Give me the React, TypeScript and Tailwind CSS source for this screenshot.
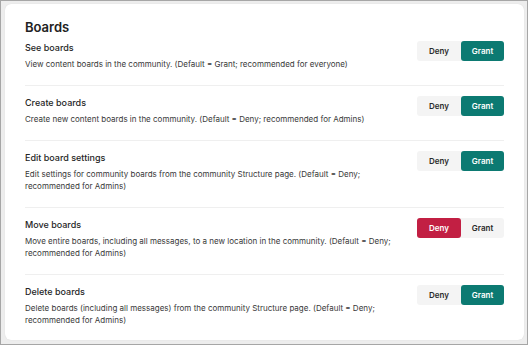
import React from "react";

type Row = { title: string; desc: string; value: "grant" | "deny" };

const rows: Row[] = [
  { title: "See boards", desc: "View content boards in the community. (Default = Grant; recommended for everyone)", value: "grant" },
  { title: "Create boards", desc: "Create new content boards in the community. (Default = Deny; recommended for Admins)", value: "grant" },
  { title: "Edit board settings", desc: "Edit settings for community boards from the community Structure page. (Default = Deny; recommended for Admins)", value: "grant" },
  { title: "Move boards", desc: "Move entire boards, including all messages, to a new location in the community. (Default = Deny; recommended for Admins)", value: "deny" },
  { title: "Delete boards", desc: "Delete boards (including all messages) from the community Structure page. (Default = Deny; recommended for Admins)", value: "grant" },
];

function Toggle({ value }: { value: "grant" | "deny" }) {
  return (
    <div className="flex shrink-0 rounded-[3px] bg-[#f4f4f4] text-[8px] font-semibold leading-none">
      <div
        className={
          value === "deny"
            ? "flex h-[20px] w-[44px] items-center justify-center rounded-[3px] bg-[#c21f43] text-white"
            : "flex h-[20px] w-[44px] items-center justify-center rounded-[3px] text-[#2b2b2b]"
        }
      >
        Deny
      </div>
      <div
        className={
          value === "grant"
            ? "flex h-[20px] w-[43px] items-center justify-center rounded-[3px] bg-[#0c7a72] text-white"
            : "flex h-[20px] w-[43px] items-center justify-center rounded-[3px] text-[#2b2b2b]"
        }
      >
        Grant
      </div>
    </div>
  );
}

export default function App() {
  return (
    <div
      className="h-[345px] w-[528px] border border-[#a6a6a6] bg-[#ededed] pt-[3px] pl-[4px] pr-[3px] pb-[4px]"
      style={{ fontFamily: "Inter, 'Noto Sans', sans-serif" }}
    >
      <div className="h-full rounded-[6px] bg-white px-[20px] pt-[14px] shadow-[0_0_1px_rgba(0,0,0,0.12)]">
        <h1 className="text-[13px] font-semibold leading-[18px] text-[#222222]">Boards</h1>
        <div className="flex flex-col">
          {rows.map((r, i) => (
            <div
              key={r.title}
              className={
                i === 0
                  ? "flex items-start justify-between gap-[16px] pt-[5px] pb-[15px]"
                  : "flex items-start justify-between gap-[16px] border-t border-[#efefef] pt-[10px] pb-[15px]"
              }
            >
              <div className="min-w-0 flex-1">
                <div className="text-[9px] font-medium leading-[14px] text-[#262626]">{r.title}</div>
                <div className="mt-[3px] text-[8px] leading-[12px] text-[#383838]">{r.desc}</div>
              </div>
              <Toggle value={r.value} />
            </div>
          ))}
        </div>
      </div>
    </div>
  );
}
